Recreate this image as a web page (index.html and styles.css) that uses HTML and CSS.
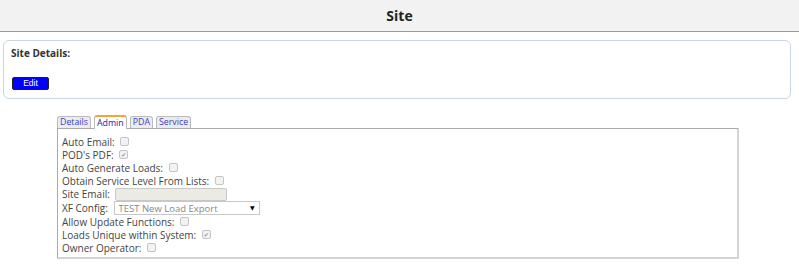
FILE: index.html
```html
<!DOCTYPE html>
<html lang="en">
<head>
  <meta charset="UTF-8" />
  <title>Site</title>
  <link rel="stylesheet" href="styles.css">
</head>
<body>
  <header class="page-head">
    <h1>Site</h1>
  </header>

  <section class="details-box">
    <h2>Site Details:</h2>
    <button class="edit-btn">Edit</button>
  </section>

  <div class="tabs">
    <ul class="tab-list">
      <li class="tab">Details</li>
      <li class="tab active">Admin</li>
      <li class="tab">PDA</li>
      <li class="tab">Service</li>
    </ul>
    <div class="tab-panel">
      <div class="row">Auto Email: <span class="check"></span></div>
      <div class="row">POD's PDF: <span class="check on">&#10004;</span></div>
      <div class="row">Auto Generate Loads: <span class="check"></span></div>
      <div class="row">Obtain Service Level From Lists: <span class="check"></span></div>
      <div class="row tall">Site Email: <span class="text-field"></span></div>
      <div class="row tall">XF Config: <span class="select-field">TEST New Load Export<span class="caret">&#9660;</span></span></div>
      <div class="row">Allow Update Functions: <span class="check"></span></div>
      <div class="row">Loads Unique within System: <span class="check on">&#10004;</span></div>
      <div class="row">Owner Operator: <span class="check"></span></div>
    </div>
  </div>
</body>
</html>
```

FILE: styles.css
```css
* { box-sizing: border-box; }

body {
  margin: 0;
  background: #fff;
  font-family: "Open Sans", "DejaVu Sans", sans-serif;
  color: #333;
}

.page-head {
  height: 32px;
  background: #f2f2f2;
  border-bottom: 1px solid #9a9a9a;
  display: flex;
  align-items: center;
  justify-content: center;
}
.page-head h1 {
  margin: 0;
  font-size: 14px;
  font-weight: 700;
  color: #222;
}

.details-box {
  margin: 8px 8px 0 3px;
  height: 59px;
  border: 1px solid #c9d5e8;
  border-radius: 6px;
  padding: 5px 7px;
}
.details-box h2 {
  margin: 0;
  font-size: 10px;
  line-height: 14px;
  font-weight: 700;
  color: #333;
}
.edit-btn {
  display: block;
  margin: 17px 0 0 1px;
  width: 37px;
  height: 13px;
  padding: 0;
  background: #0000ff;
  border: 1px solid #222;
  border-radius: 2px;
  color: #fff;
  font-family: "Liberation Sans", Arial, sans-serif;
  font-size: 8.5px;
  line-height: 11px;
}

.tabs {
  margin: 16px 0 0 57px;
  width: 682px;
}
.tab-list {
  list-style: none;
  margin: 0;
  padding: 0;
  display: flex;
  gap: 3px;
  height: 13px;
  align-items: flex-end;
}
.tab {
  height: 12px;
  padding: 0 2px;
  font-size: 8.8px;
  line-height: 11px;
  color: #3c3cc8;
  background: #ececec;
  border: 1px solid #bbb;
  border-bottom: none;
  border-radius: 3px 3px 0 0;
}
.tab.active {
  height: 14px;
  color: #1a1aa8;
  background: #fff;
  border-top: 2px solid #f0a830;
  line-height: 12px;
  position: relative;
  top: 1px;
}

.tab-panel {
  border: 1px solid #aaa;
  border-right: 2px solid #d4d4d4;
  border-bottom: 2px solid #d4d4d4;
  height: 131px;
  padding: 6px 4px 0;
}
.row {
  height: 13px;
  display: flex;
  align-items: center;
  gap: 3px;
  font-size: 10px;
  color: #444;
  white-space: pre;
}
.row.tall {
  height: 14px;
}
.check {
  display: inline-flex;
  align-items: center;
  justify-content: center;
  width: 9px;
  height: 9px;
  border: 1px solid #c4c4c4;
  border-radius: 2px;
  background: #f2f2f2;
  color: #999;
  font-size: 6px;
  line-height: 1;
}
.text-field {
  display: inline-block;
  width: 112px;
  height: 13px;
  background: #ebebe4;
  border: 1px solid #c8c8c8;
  border-radius: 2px;
}
.select-field {
  display: inline-flex;
  justify-content: space-between;
  align-items: center;
  width: 146px;
  height: 14px;
  padding: 0 4px;
  border: 1px solid #c8c8c8;
  color: #888;
  font-size: 9.5px;
}
.caret {
  font-size: 6px;
  color: #000;
}
```
